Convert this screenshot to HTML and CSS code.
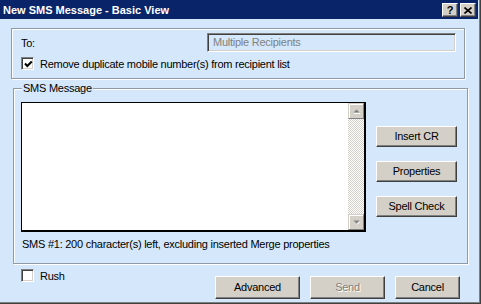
FILE: index.html
```html
<!DOCTYPE html>
<html lang="en">
<head>
    <meta charset="UTF-8">
    <meta name="viewport" content="width=device-width, initial-scale=1.0">
    <title>New SMS Message - Basic View</title>
    <link rel="stylesheet" href="styles.css">
</head>
<body>
    <div class="window">
        <div class="titlebar">
            <span class="title">New SMS Message - Basic View</span>
            <div class="caption-buttons">
                <span class="cap-btn help">?</span>
                <span class="cap-btn">
                    <svg width="8" height="7" viewBox="0 0 8 7"><path d="M0.5 0.5 L7.5 6.5 M7.5 0.5 L0.5 6.5" stroke="#000" stroke-width="1.6"/></svg>
                </span>
            </div>
        </div>

        <div class="group group-to">
            <div class="row-to">
                <span class="label">To:</span>
                <div class="field disabled">Multiple Recipients</div>
            </div>
            <label class="check-row">
                <span class="checkbox">
                    <svg width="9" height="9" viewBox="0 0 9 9"><path d="M1 3.5 L3.3 6 L7.8 1.5" stroke="#000" stroke-width="2" fill="none"/></svg>
                </span>
                Remove duplicate mobile number(s) from recipient list
            </label>
        </div>

        <div class="group group-sms">
            <span class="legend">SMS Message</span>
            <div class="sms-body">
                <div class="memo">
                    <div class="memo-text"></div>
                    <div class="scrollbar">
                        <span class="scroll-btn">
                            <svg width="7" height="5" viewBox="0 0 7 5"><path d="M3.5 0.5 L6.5 3.5 L0.5 3.5 Z" fill="#808080"/><path d="M1 4.5 H7" stroke="#fff"/></svg>
                        </span>
                        <span class="scroll-track"></span>
                        <span class="scroll-btn">
                            <svg width="7" height="5" viewBox="0 0 7 5"><path d="M0.5 0.5 L6.5 0.5 L3.5 3.5 Z" fill="#808080"/><path d="M4 4.5 L6.5 2" stroke="#fff"/></svg>
                        </span>
                    </div>
                </div>
                <div class="side-buttons">
                    <span class="btn">Insert CR</span>
                    <span class="btn">Properties</span>
                    <span class="btn">Spell Check</span>
                </div>
            </div>
            <div class="counter">SMS #1: 200 character(s) left, excluding inserted Merge properties</div>
        </div>

        <div class="footer">
            <label class="check-row rush">
                <span class="checkbox"></span>
                Rush
            </label>
            <div class="actions">
                <span class="btn advanced">Advanced</span>
                <span class="btn send disabled">Send</span>
                <span class="btn cancel">Cancel</span>
            </div>
        </div>
    </div>
</body>
</html>
```

FILE: styles.css
```css
body {
    margin: 0;
    font-family: 'Liberation Sans', Arial, sans-serif;
    font-size: 11px;
    letter-spacing: -0.25px;
    color: #000;
}

.window {
    width: 481px;
    height: 304px;
    box-sizing: border-box;
    background: #d5e8fb;
    border-right: 1px solid #404040;
    border-bottom: 1px solid #404040;
    box-shadow: inset -1px -1px 0 #808080;
    display: flex;
    flex-direction: column;
    overflow: hidden;
}

.titlebar {
    height: 19px;
    margin-right: 2px;
    background: #0a246a;
    display: flex;
    align-items: center;
    justify-content: space-between;
    padding: 0 2px 0 3px;
    flex-shrink: 0;
}

.title {
    color: #fff;
    font-weight: bold;
    font-size: 11px;
    letter-spacing: 0;
    line-height: 13px;
    padding-top: 1px;
}

.caption-buttons {
    display: flex;
    gap: 2px;
    margin-top: 1px;
}

.cap-btn {
    width: 16px;
    height: 14px;
    box-sizing: border-box;
    background: #d4d0c8;
    border-top: 1px solid #fff;
    border-left: 1px solid #fff;
    border-right: 1px solid #404040;
    border-bottom: 1px solid #404040;
    box-shadow: inset -1px -1px 0 #808080;
    display: flex;
    align-items: center;
    justify-content: center;
    font-weight: bold;
    font-size: 11px;
    letter-spacing: 0;
    line-height: 12px;
}

.cap-btn svg {
    margin-left: -1px;
}

.group {
    box-sizing: border-box;
    border: 1px solid #8f9aa8;
    box-shadow: inset 1px 1px 0 #fff, 1px 1px 0 #fff;
    flex-shrink: 0;
}

.group-to {
    margin: 9px 0 0 11px;
    width: 454px;
    height: 51px;
    padding: 4px 8px 0 9px;
}

.row-to {
    display: flex;
    align-items: center;
    height: 19px;
}

.row-to .label {
    flex: 1;
    padding-top: 1px;
}

.field {
    width: 249px;
    height: 19px;
    box-sizing: border-box;
    border-top: 1px solid #808080;
    border-left: 1px solid #808080;
    border-right: 1px solid #fff;
    border-bottom: 1px solid #fff;
    box-shadow: inset 1px 1px 0 #404040, inset -1px -1px 0 #d4d0c8;
    padding: 2px 0 0 5px;
    line-height: 13px;
}

.field.disabled {
    color: #808080;
    background: #d5e8fb;
}

.check-row {
    display: flex;
    align-items: center;
    gap: 6px;
    height: 13px;
    margin-top: 5px;
}

.checkbox {
    width: 13px;
    height: 13px;
    box-sizing: border-box;
    background: #fff;
    border-top: 1px solid #808080;
    border-left: 1px solid #808080;
    border-right: 1px solid #fff;
    border-bottom: 1px solid #fff;
    box-shadow: inset 1px 1px 0 #404040, inset -1px -1px 0 #d4d0c8;
    display: flex;
    align-items: center;
    justify-content: center;
    flex-shrink: 0;
}

.checkbox svg {
    margin: 1px 0 0 1px;
}

.group-sms {
    position: relative;
    margin: 9px 0 0 13px;
    width: 455px;
    height: 176px;
    padding: 13px 0 0 7px;
}

.legend {
    position: absolute;
    top: -7px;
    left: 8px;
    padding: 0 1px;
    background: #d5e8fb;
    line-height: 13px;
}

.sms-body {
    display: flex;
    align-items: flex-start;
}

.memo {
    width: 345px;
    height: 130px;
    box-sizing: border-box;
    background: #fff;
    border: 1px solid #000;
    border-right-width: 2px;
    border-bottom-width: 2px;
    display: flex;
}

.memo-text {
    flex: 1;
}

.scrollbar {
    width: 16px;
    display: flex;
    flex-direction: column;
}

.scroll-btn {
    height: 16px;
    box-sizing: border-box;
    background: #d4d0c8;
    border-top: 1px solid #d4d0c8;
    border-left: 1px solid #d4d0c8;
    border-right: 1px solid #808080;
    border-bottom: 1px solid #808080;
    box-shadow: inset 1px 1px 0 #fff;
    display: flex;
    align-items: center;
    justify-content: center;
}

.scroll-track {
    flex: 1;
    background: repeating-conic-gradient(#d4d0c8 0 25%, #fff 0 50%) 0 0 / 2px 2px;
}

.side-buttons {
    display: flex;
    flex-direction: column;
    gap: 14px;
    margin: 24px 0 0 10px;
}

.btn {
    box-sizing: border-box;
    height: 21px;
    width: 81px;
    background: #d4d0c8;
    border-top: 1px solid #fff;
    border-left: 1px solid #fff;
    border-right: 1px solid #404040;
    border-bottom: 1px solid #404040;
    box-shadow: inset -1px -1px 0 #808080;
    display: flex;
    align-items: center;
    justify-content: center;
    line-height: 13px;
}

.btn.disabled {
    color: #808080;
    text-shadow: 1px 1px 0 #fff;
}

.counter {
    margin-top: 6px;
    padding-left: 1px;
    line-height: 13px;
}

.footer {
    display: flex;
    align-items: flex-start;
    padding: 0 20px 0 21px;
}

.rush {
    margin-top: 5px;
}

.actions {
    display: flex;
    gap: 10px;
    margin: 12px 0 0 auto;
}

.actions .btn {
    height: 23px;
}

.advanced {
    width: 85px;
}

.actions .send {
    width: 75px;
}

.cancel {
    width: 65px;
}
```
